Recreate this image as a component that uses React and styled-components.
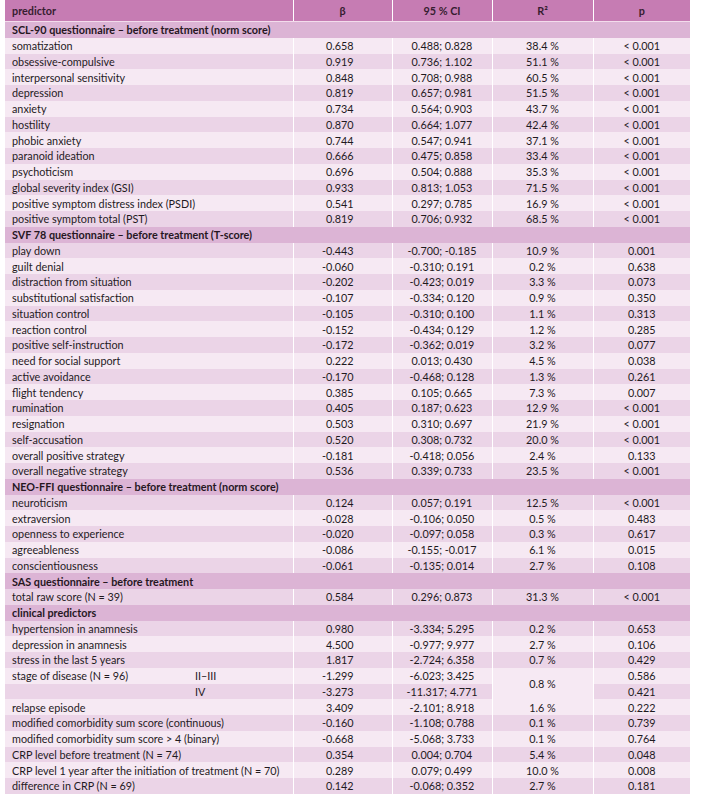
import styled, { createGlobalStyle } from 'styled-components';

const GlobalStyle = createGlobalStyle`
  body {
    margin: 0;
    background: #ffffff;
    font-family: 'Lato', 'Open Sans', sans-serif;
  }
`;

const Page = styled.div`
  padding: 0 0 0 5px;
`;

const Table = styled.table`
  width: 685px;
  table-layout: fixed;
  border-collapse: collapse;
  font-size: 10.8px;
  color: #1f1a1e;
`;

const HeadCell = styled.th`
  height: 21px;
  padding: 0 ${(p) => (p.$left ? '7px' : '0')};
  background: #c67cb3;
  color: #361c30;
  font-weight: 700;
  text-align: ${(p) => (p.$left ? 'left' : 'center')};
  border-left: ${(p) => (p.$left ? 'none' : '1px solid #ffffff')};
  border-bottom: 1px solid #f3dcec;
`;

const SectionCell = styled.td`
  height: 15.75px;
  padding: 0 7px;
  background: #dcb4d5;
  font-weight: 700;
  color: #26171f;
  white-space: nowrap;
`;

const Cell = styled.td`
  height: 15.75px;
  padding: 0 ${(p) => (p.$align === 'right' ? '38px' : p.$align === 'left' ? '7px' : '0')} 0
    ${(p) => (p.$align === 'left' ? '7px' : '0')};
  background: ${(p) => (p.$dark ? '#ebd4e7' : '#f6e9f3')};
  text-align: ${(p) => p.$align || 'center'};
  border-left: ${(p) => (p.$align === 'left' ? 'none' : '1px solid #ffffff')};
  white-space: nowrap;
  line-height: 15px;
`;

const Predictor = styled.div`
  display: grid;
  grid-template-columns: 183px 1fr;
`;

const rows = [
  { section: 'SCL-90 questionnaire – before treatment (norm score)' },
  ['somatization', '0.658', '0.488; 0.828', '38.4 %', '< 0.001'],
  ['obsessive-compulsive', '0.919', '0.736; 1.102', '51.1 %', '< 0.001'],
  ['interpersonal sensitivity', '0.848', '0.708; 0.988', '60.5 %', '< 0.001'],
  ['depression', '0.819', '0.657; 0.981', '51.5 %', '< 0.001'],
  ['anxiety', '0.734', '0.564; 0.903', '43.7 %', '< 0.001'],
  ['hostility', '0.870', '0.664; 1.077', '42.4 %', '< 0.001'],
  ['phobic anxiety', '0.744', '0.547; 0.941', '37.1 %', '< 0.001'],
  ['paranoid ideation', '0.666', '0.475; 0.858', '33.4 %', '< 0.001'],
  ['psychoticism', '0.696', '0.504; 0.888', '35.3 %', '< 0.001'],
  ['global severity index (GSI)', '0.933', '0.813; 1.053', '71.5 %', '< 0.001'],
  ['positive symptom distress index (PSDI)', '0.541', '0.297; 0.785', '16.9 %', '< 0.001'],
  ['positive symptom total (PST)', '0.819', '0.706; 0.932', '68.5 %', '< 0.001'],
  { section: 'SVF 78 questionnaire – before treatment (T-score)' },
  ['play down', '-0.443', '-0.700; -0.185', '10.9 %', '0.001'],
  ['guilt denial', '-0.060', '-0.310; 0.191', '0.2 %', '0.638'],
  ['distraction from situation', '-0.202', '-0.423; 0.019', '3.3 %', '0.073'],
  ['substitutional satisfaction', '-0.107', '-0.334; 0.120', '0.9 %', '0.350'],
  ['situation control', '-0.105', '-0.310; 0.100', '1.1 %', '0.313'],
  ['reaction control', '-0.152', '-0.434; 0.129', '1.2 %', '0.285'],
  ['positive self-instruction', '-0.172', '-0.362; 0.019', '3.2 %', '0.077'],
  ['need for social support', '0.222', '0.013; 0.430', '4.5 %', '0.038'],
  ['active avoidance', '-0.170', '-0.468; 0.128', '1.3 %', '0.261'],
  ['flight tendency', '0.385', '0.105; 0.665', '7.3 %', '0.007'],
  ['rumination', '0.405', '0.187; 0.623', '12.9 %', '< 0.001'],
  ['resignation', '0.503', '0.310; 0.697', '21.9 %', '< 0.001'],
  ['self-accusation', '0.520', '0.308; 0.732', '20.0 %', '< 0.001'],
  ['overall positive strategy', '-0.181', '-0.418; 0.056', '2.4 %', '0.133'],
  ['overall negative strategy', '0.536', '0.339; 0.733', '23.5 %', '< 0.001'],
  { section: 'NEO-FFI questionnaire – before treatment (norm score)' },
  ['neuroticism', '0.124', '0.057; 0.191', '12.5 %', '< 0.001'],
  ['extraversion', '-0.028', '-0.106; 0.050', '0.5 %', '0.483'],
  ['openness to experience', '-0.020', '-0.097; 0.058', '0.3 %', '0.617'],
  ['agreeableness', '-0.086', '-0.155; -0.017', '6.1 %', '0.015'],
  ['conscientiousness', '-0.061', '-0.135; 0.014', '2.7 %', '0.108'],
  { section: 'SAS questionnaire – before treatment' },
  ['total raw score (N = 39)', '0.584', '0.296; 0.873', '31.3 %', '< 0.001'],
  { section: 'clinical predictors' },
  ['hypertension in anamnesis', '0.980', '-3.334; 5.295', '0.2 %', '0.653'],
  ['depression in anamnesis', '4.500', '-0.977; 9.977', '2.7 %', '0.106'],
  ['stress in the last 5 years', '1.817', '-2.724; 6.358', '0.7 %', '0.429'],
  { label: 'stage of disease (N = 96)', sub: 'II–III', values: ['-1.299', '-6.023; 3.425', '0.8 %', '0.586'], span: 2 },
  { label: '', sub: 'IV', values: ['-3.273', '-11.317; 4.771', null, '0.421'] },
  ['relapse episode', '3.409', '-2.101; 8.918', '1.6 %', '0.222'],
  ['modified comorbidity sum score (continuous)', '-0.160', '-1.108; 0.788', '0.1 %', '0.739'],
  ['modified comorbidity sum score > 4 (binary)', '-0.668', '-5.068; 3.733', '0.1 %', '0.764'],
  ['CRP level before treatment (N = 74)', '0.354', '0.004; 0.704', '5.4 %', '0.048'],
  ['CRP level 1 year after the initiation of treatment (N = 70)', '0.289', '0.079; 0.499', '10.0 %', '0.008'],
  ['difference in CRP (N = 69)', '0.142', '-0.068; 0.352', '2.7 %', '0.181'],
];

function DataRow({ row, dark }) {
  if (Array.isArray(row)) {
    const [name, beta, ci, r2, p] = row;
    return (
      <tr>
        <Cell $align="left" $dark={dark}>{name}</Cell>
        <Cell $align="right" $dark={dark}>{beta}</Cell>
        <Cell $dark={dark}>{ci}</Cell>
        <Cell $dark={dark}>{r2}</Cell>
        <Cell $dark={dark}>{p}</Cell>
      </tr>
    );
  }
  const [beta, ci, r2, p] = row.values;
  return (
    <tr>
      <Cell $align="left" $dark={dark}>
        <Predictor>
          <span>{row.label}</span>
          <span>{row.sub}</span>
        </Predictor>
      </Cell>
      <Cell $align="right" $dark={dark}>{beta}</Cell>
      <Cell $dark={dark}>{ci}</Cell>
      {r2 !== null && (
        <Cell $dark={false} rowSpan={row.span || 1}>
          {r2}
        </Cell>
      )}
      <Cell $dark={dark}>{p}</Cell>
    </tr>
  );
}

export default function App() {
  return (
    <Page>
      <GlobalStyle />
      <Table>
        <colgroup>
          <col style={{ width: 288 }} />
          <col style={{ width: 99 }} />
          <col style={{ width: 100 }} />
          <col style={{ width: 101 }} />
          <col style={{ width: 97 }} />
        </colgroup>
        <thead>
          <tr>
            <HeadCell $left>predictor</HeadCell>
            <HeadCell>β</HeadCell>
            <HeadCell>95 % CI</HeadCell>
            <HeadCell>R²</HeadCell>
            <HeadCell>p</HeadCell>
          </tr>
        </thead>
        <tbody>
          {rows.map((row, i) =>
            row.section ? (
              <tr key={i}>
                <SectionCell colSpan={5}>{row.section}</SectionCell>
              </tr>
            ) : (
              <DataRow key={i} row={row} dark={i % 2 === 0} />
            )
          )}
        </tbody>
      </Table>
    </Page>
  );
}
